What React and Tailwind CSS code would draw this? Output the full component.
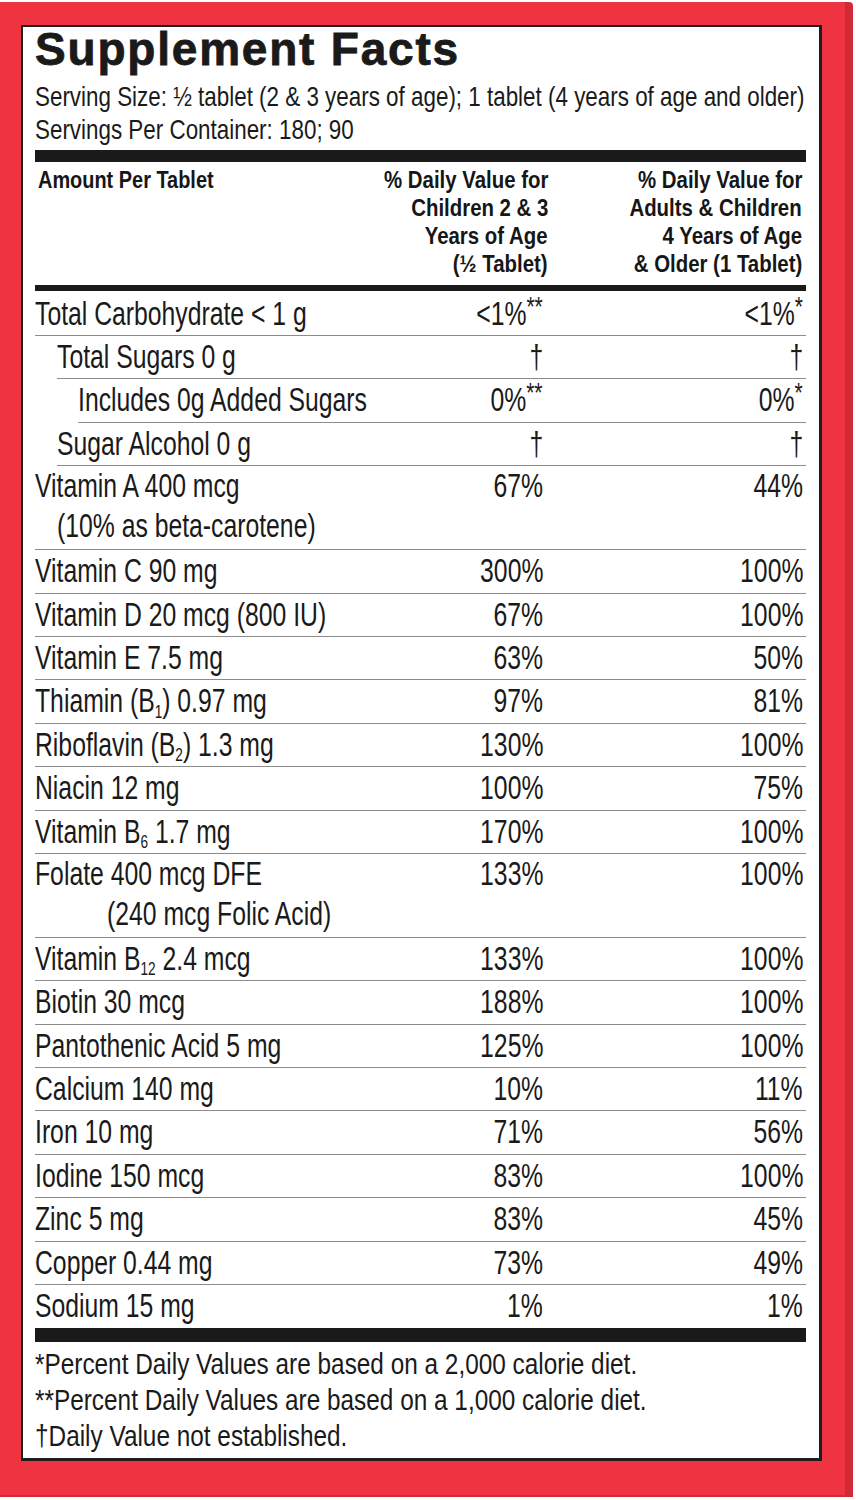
import React from "react";

const F = "font-['Liberation_Sans',Arial,sans-serif]";

const T = ({ children, right, s = "scale-x-[0.75]" }) => (
  <span className={`inline-block whitespace-nowrap ${right ? "origin-right" : "origin-left"} ${s}`}>
    {children}
  </span>
);

const Sub = ({ children }) => (
  <span className="text-[0.55em] relative top-[0.3em]">{children}</span>
);
const Sup = ({ children }) => (
  <span className="text-[0.85em] relative top-[-0.32em]">{children}</span>
);

const rows = [
  { label: "Total Carbohydrate < 1 g", a: <>&lt;1%<Sup>**</Sup></>, b: <>&lt;1%<Sup>*</Sup></>, indent: 0, first: true },
  { label: "Total Sugars 0 g", a: "†", b: "†", indent: 22 },
  { label: "Includes 0g Added Sugars", a: <>0%<Sup>**</Sup></>, b: <>0%<Sup>*</Sup></>, indent: 43 },
  { label: "Sugar Alcohol 0 g", a: "†", b: "†", indent: 22 },
  { label: "Vitamin A 400 mcg", sub: "(10% as beta-carotene)", subIndent: "pl-[22px]", a: "67%", b: "44%" },
  { label: "Vitamin C 90 mg", a: "300%", b: "100%" },
  { label: "Vitamin D 20 mcg (800 IU)", a: "67%", b: "100%" },
  { label: "Vitamin E 7.5 mg", a: "63%", b: "50%" },
  { label: <>Thiamin (B<Sub>1</Sub>) 0.97 mg</>, a: "97%", b: "81%" },
  { label: <>Riboflavin (B<Sub>2</Sub>) 1.3 mg</>, a: "130%", b: "100%" },
  { label: "Niacin 12 mg", a: "100%", b: "75%" },
  { label: <>Vitamin B<Sub>6</Sub> 1.7 mg</>, a: "170%", b: "100%" },
  { label: "Folate 400 mcg DFE", sub: "(240 mcg Folic Acid)", subIndent: "pl-[72px]", a: "133%", b: "100%" },
  { label: <>Vitamin B<Sub>12</Sub> 2.4 mcg</>, a: "133%", b: "100%" },
  { label: "Biotin 30 mcg", a: "188%", b: "100%" },
  { label: "Pantothenic Acid 5 mg", a: "125%", b: "100%" },
  { label: "Calcium 140 mg", a: "10%", b: "11%" },
  { label: "Iron 10 mg", a: "71%", b: "56%" },
  { label: "Iodine 150 mcg", a: "83%", b: "100%" },
  { label: "Zinc 5 mg", a: "83%", b: "45%" },
  { label: "Copper 0.44 mg", a: "73%", b: "49%" },
  { label: "Sodium 15 mg", a: "1%", b: "1%", last: true },
];

const indentClass = { 0: "ml-0", 22: "ml-[22px]", 43: "ml-[43px]" };

function Row({ r }) {
  const ind = indentClass[r.indent || 0];
  const height = r.sub ? "h-[84px]" : r.first ? "h-[45px] pt-[3px]" : "h-[43.4px] pt-[1px]";
  const border = r.last ? "" : "border-b border-[#8c8c8c]";
  return (
    <div className={`flex ${ind} ${height} ${border} box-border text-[33px] leading-[40px] text-[#1a1a1a]`}>
      <div className="flex-1 min-w-0 whitespace-nowrap">
        <div><T>{r.label}</T></div>
        {r.sub && <div className={r.subIndent}><T>{r.sub}</T></div>}
      </div>
      <div className="w-[150px] text-right"><T right>{r.a}</T></div>
      <div className="w-[263px] pr-[3px] text-right"><T right>{r.b}</T></div>
    </div>
  );
}

const HS = "scale-x-[0.85]";

export default function App() {
  return (
    <div className={`w-[856px] h-[1500px] overflow-hidden bg-white pt-[2px] ${F}`}>
      <div className="w-[853px] h-[1495px] bg-[#ef3340] border-r-[8px] border-b-[2px] border-[#cf2a36] rounded-tr-[4px] pl-[21px] pt-[23px]">
        <div className="w-[801px] h-[1436px] bg-white border-t-2 border-l-2 border-r-[3px] border-b-[3px] border-[#1e1e1e] pl-[12px] pr-[13px] box-border">
          <div className="font-bold text-[46px] leading-[44px] tracking-[1.8px] text-[#1a1a1a] [-webkit-text-stroke:0.8px_#1a1a1a] whitespace-nowrap">
            Supplement Facts
          </div>
          <div className="mt-[9px] overflow-hidden text-[28px] leading-[33px] text-[#1a1a1a]">
            <div><T s="scale-x-[0.80]">Serving Size: ½ tablet (2 &amp; 3 years of age); 1 tablet (4 years of age and older)</T></div>
            <div><T s="scale-x-[0.80]">Servings Per Container: 180; 90</T></div>
          </div>

          <div className="mt-[4px] h-[12px] bg-[#1a1a1a]" />

          <div className="flex pt-[4px] pb-[7px] text-[24px] leading-[28px] font-bold text-[#161616]">
            <div className="flex-1 min-w-0 pl-[3px]"><T s="scale-x-[0.83]">Amount Per Tablet</T></div>
            <div className="w-[260px] text-right">
              <div><T right s={HS}>% Daily Value for</T></div>
              <div><T right s={HS}>Children 2 &amp; 3</T></div>
              <div><T right s={HS}>Years of Age</T></div>
              <div><T right s={HS}>(½ Tablet)</T></div>
            </div>
            <div className="w-[258px] pr-[4px] text-right">
              <div><T right s={HS}>% Daily Value for</T></div>
              <div><T right s={HS}>Adults &amp; Children</T></div>
              <div><T right s={HS}>4 Years of Age</T></div>
              <div><T right s={HS}>&amp; Older (1 Tablet)</T></div>
            </div>
          </div>

          <div className="h-[6px] bg-[#1a1a1a]" />

          <div>
            {rows.map((r, i) => (
              <Row key={i} r={r} />
            ))}
          </div>

          <div className="h-[14px] bg-[#1a1a1a]" />

          <div className="pt-[4px] overflow-hidden text-[29px] leading-[36px] text-[#1a1a1a]">
            <div><T s="scale-x-[0.84]">*Percent Daily Values are based on a 2,000 calorie diet.</T></div>
            <div><T s="scale-x-[0.84]">**Percent Daily Values are based on a 1,000 calorie diet.</T></div>
            <div><T s="scale-x-[0.84]">†Daily Value not established.</T></div>
          </div>
        </div>
      </div>
    </div>
  );
}
